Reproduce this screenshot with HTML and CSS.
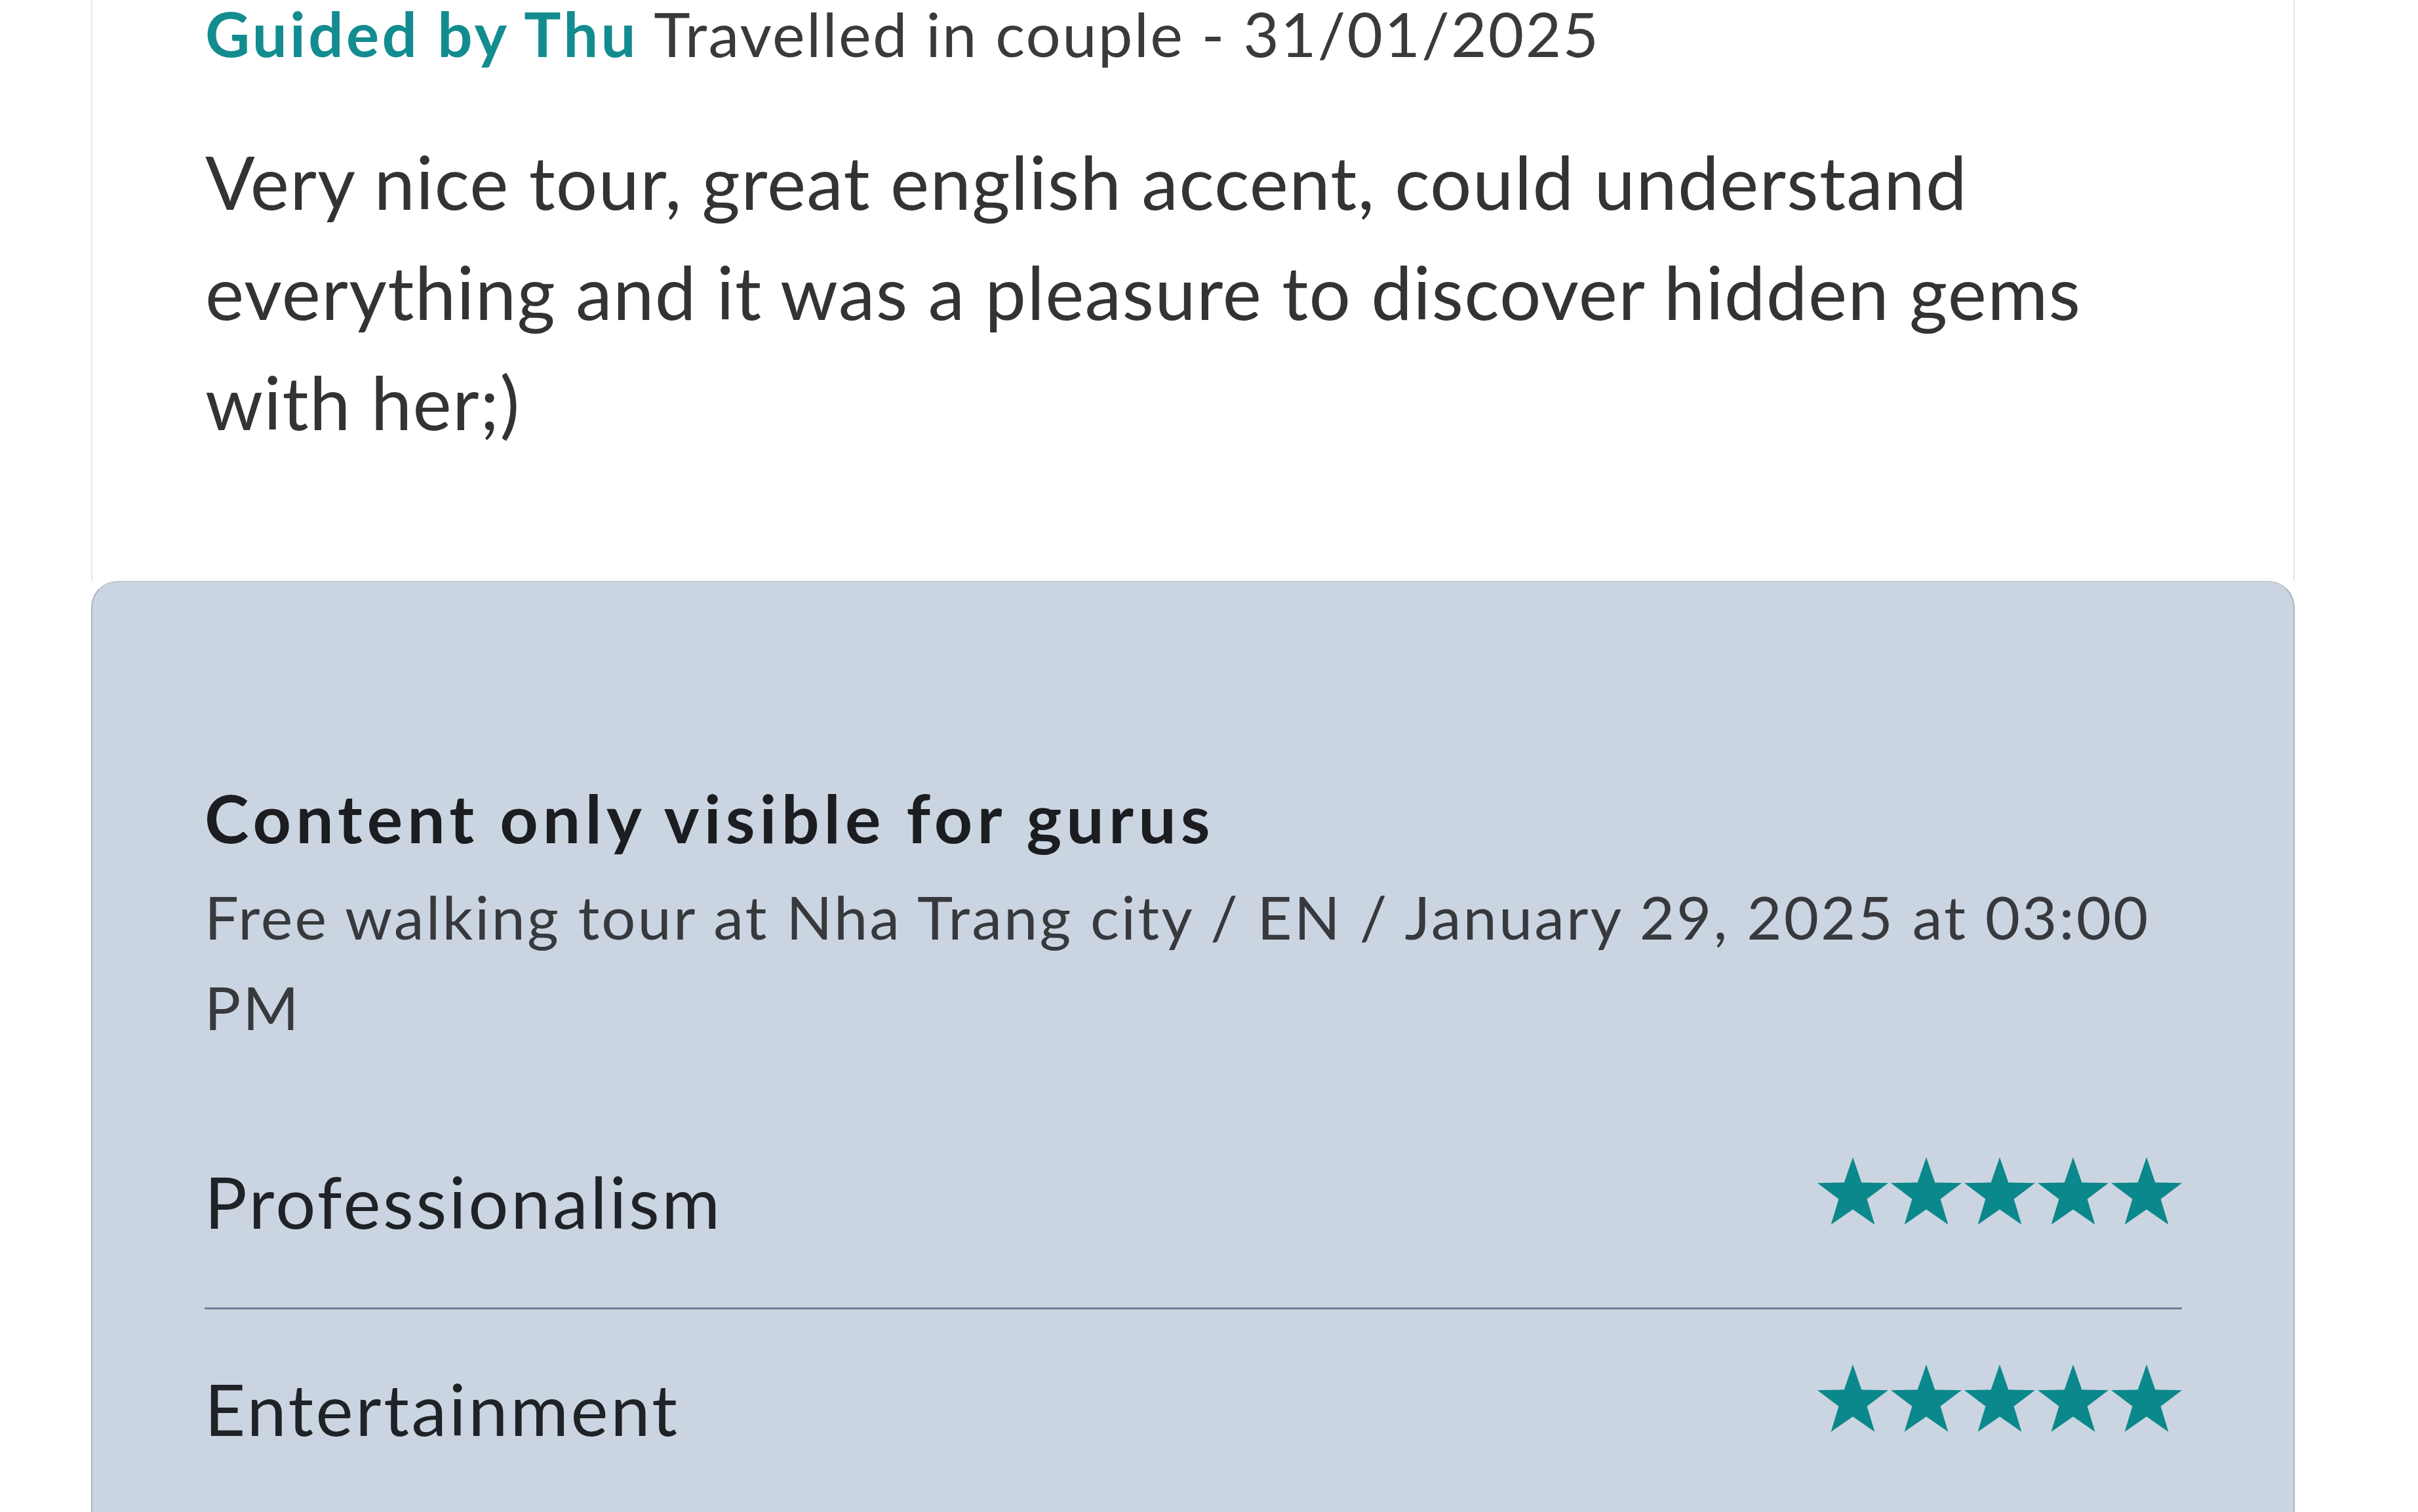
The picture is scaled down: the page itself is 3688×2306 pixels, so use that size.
FILE: index.html
```html
<!DOCTYPE html>
<html lang="en">
<head>
<meta charset="utf-8">
<title>Review</title>
<link rel="stylesheet" href="styles.css">
</head>
<body>
<div class="review">
  <div class="review-body">
    <p class="meta"><span class="guide">Guided by Thu</span> Travelled in couple - 31/01/2025</p>
    <p class="comment">Very nice tour, great english accent, could understand everything and it was a pleasure to discover hidden gems with her;)</p>
  </div>
  <div class="guru">
    <h3 class="guru-title">Content only visible for gurus</h3>
    <p class="tour">Free walking tour at Nha Trang city / EN / January 29, 2025 at 03:00 PM</p>
    <div class="rating">
      <span class="rating-label">Professionalism</span>
      <div class="stars">
        <svg class="star" viewBox="0 0 108 103"><polygon points="54,0 67.3,38.4 108,39.3 75.6,63.8 87.4,102.8 54,79.5 20.6,102.8 32.4,63.8 0,39.3 40.7,38.4"/></svg>
        <svg class="star" viewBox="0 0 108 103"><polygon points="54,0 67.3,38.4 108,39.3 75.6,63.8 87.4,102.8 54,79.5 20.6,102.8 32.4,63.8 0,39.3 40.7,38.4"/></svg>
        <svg class="star" viewBox="0 0 108 103"><polygon points="54,0 67.3,38.4 108,39.3 75.6,63.8 87.4,102.8 54,79.5 20.6,102.8 32.4,63.8 0,39.3 40.7,38.4"/></svg>
        <svg class="star" viewBox="0 0 108 103"><polygon points="54,0 67.3,38.4 108,39.3 75.6,63.8 87.4,102.8 54,79.5 20.6,102.8 32.4,63.8 0,39.3 40.7,38.4"/></svg>
        <svg class="star" viewBox="0 0 108 103"><polygon points="54,0 67.3,38.4 108,39.3 75.6,63.8 87.4,102.8 54,79.5 20.6,102.8 32.4,63.8 0,39.3 40.7,38.4"/></svg>
      </div>
    </div>
    <div class="rating">
      <span class="rating-label">Entertainment</span>
      <div class="stars">
        <svg class="star" viewBox="0 0 108 103"><polygon points="54,0 67.3,38.4 108,39.3 75.6,63.8 87.4,102.8 54,79.5 20.6,102.8 32.4,63.8 0,39.3 40.7,38.4"/></svg>
        <svg class="star" viewBox="0 0 108 103"><polygon points="54,0 67.3,38.4 108,39.3 75.6,63.8 87.4,102.8 54,79.5 20.6,102.8 32.4,63.8 0,39.3 40.7,38.4"/></svg>
        <svg class="star" viewBox="0 0 108 103"><polygon points="54,0 67.3,38.4 108,39.3 75.6,63.8 87.4,102.8 54,79.5 20.6,102.8 32.4,63.8 0,39.3 40.7,38.4"/></svg>
        <svg class="star" viewBox="0 0 108 103"><polygon points="54,0 67.3,38.4 108,39.3 75.6,63.8 87.4,102.8 54,79.5 20.6,102.8 32.4,63.8 0,39.3 40.7,38.4"/></svg>
        <svg class="star" viewBox="0 0 108 103"><polygon points="54,0 67.3,38.4 108,39.3 75.6,63.8 87.4,102.8 54,79.5 20.6,102.8 32.4,63.8 0,39.3 40.7,38.4"/></svg>
      </div>
    </div>
  </div>
</div>
</body>
</html>
```

FILE: styles.css
```css
* { box-sizing: border-box; }

html, body {
  margin: 0;
  padding: 0;
  background: #ffffff;
  overflow: hidden;
}

body {
  font-family: "Lato", "Noto Sans", sans-serif;
  color: #333333;
}

.review {
  margin: -20px 0 0 139px;
  width: 3361px;
}

.review-body {
  border-left: 2px solid #e4e4e4;
  border-right: 2px solid #e4e4e4;
  padding: 0 170px 189px 172px;
  background: #ffffff;
}

.meta {
  margin: 0;
  font-size: 94px;
  line-height: 141px;
  letter-spacing: 2.3px;
  color: #3a3a3a;
}

.guide {
  color: #138c90;
  font-weight: 700;
  letter-spacing: 4.3px;
}

.comment {
  margin: 72px 0 0 0;
  font-size: 112px;
  line-height: 168px;
  letter-spacing: 1.3px;
  color: #333333;
}

.guru {
  background: #cbd5e1;
  border: 2px solid #a9b3c2;
  border-top-color: #c2cad6;
  border-bottom: none;
  border-radius: 40px 40px 0 0;
  padding: 284px 170px 40px 171px;
}

.guru-title {
  margin: 0;
  font-size: 102px;
  line-height: 150px;
  font-weight: 700;
  letter-spacing: 7.1px;
  color: #1b1d21;
}

.tour {
  margin: 7px 0 76px 0;
  font-size: 92px;
  line-height: 138px;
  letter-spacing: 3.1px;
  color: #37393d;
}

.rating {
  display: flex;
  justify-content: space-between;
  align-items: center;
  padding: 70px 0 81px 0;
  border-bottom: 3px solid #6f7f9a;
}

.rating-label {
  font-size: 108px;
  line-height: 162px;
  letter-spacing: 3.6px;
  color: #1f2226;
}

.stars {
  display: flex;
  gap: 4px;
  margin-bottom: 32px;
}

.star {
  width: 108px;
  height: 103px;
  fill: #0b888b;
  display: block;
}
```
